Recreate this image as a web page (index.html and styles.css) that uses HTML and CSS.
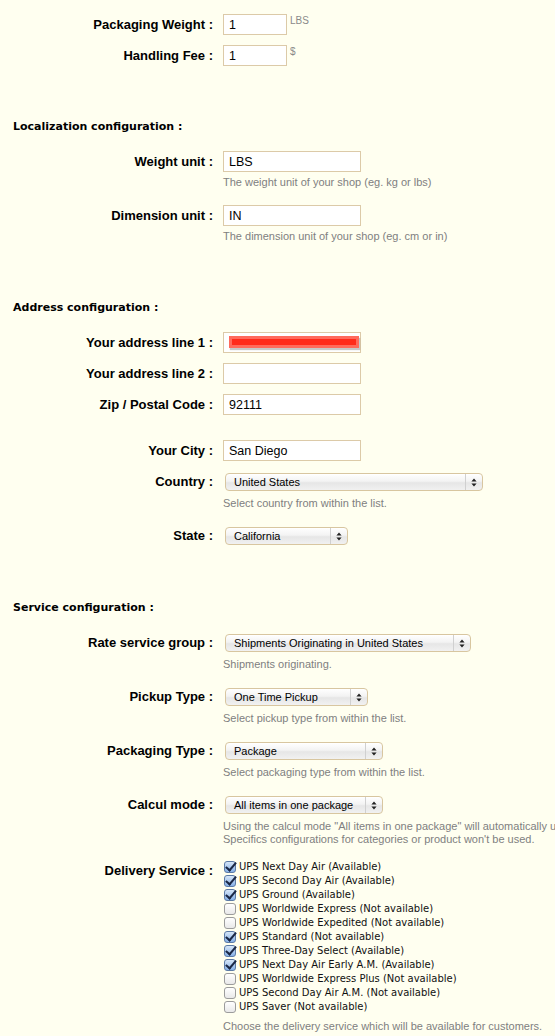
FILE: index.html
```html
<!DOCTYPE html>
<html lang="en">
<head>
<meta charset="utf-8">
<title>UPS configuration</title>
<link rel="stylesheet" href="styles.css">
</head>
<body>
<form class="form">
  <div class="row first">
    <label class="label">Packaging Weight :</label>
    <div class="field">
      <input class="input small" type="text" value="1">
      <span class="unit">LBS</span>
    </div>
  </div>
  <div class="row">
    <label class="label">Handling Fee :</label>
    <div class="field">
      <input class="input small" type="text" value="1">
      <span class="unit">$</span>
    </div>
  </div>

  <h3 class="section-title loc">Localization configuration :</h3>
  <div class="row gap16">
    <label class="label">Weight unit :</label>
    <div class="field"><input class="input" type="text" value="LBS"></div>
    <p class="help">The weight unit of your shop (eg. kg or lbs)</p>
  </div>
  <div class="row gap16">
    <label class="label">Dimension unit :</label>
    <div class="field"><input class="input" type="text" value="IN"></div>
    <p class="help">The dimension unit of your shop (eg. cm or in)</p>
  </div>

  <h3 class="section-title addr">Address configuration :</h3>
  <div class="row gap16">
    <label class="label">Your address line 1 :</label>
    <div class="field">
      <div class="redacted">
        <input class="input" type="text" value="">
        <span class="redact-bar"></span>
      </div>
    </div>
  </div>
  <div class="row">
    <label class="label">Your address line 2 :</label>
    <div class="field"><input class="input" type="text" value=""></div>
  </div>
  <div class="row">
    <label class="label">Zip / Postal Code :</label>
    <div class="field"><input class="input" type="text" value="92111"></div>
  </div>
  <div class="row gap25">
    <label class="label">Your City :</label>
    <div class="field"><input class="input" type="text" value="San Diego"></div>
  </div>
  <div class="row sel gap12">
    <label class="label">Country :</label>
    <div class="field">
      <div class="select w-country"><span class="select-text">United States</span><span class="select-arrow"><svg width="6" height="9" viewBox="0 0 6 9"><path d="M3 0.5 L5.6 3.6 H0.4 Z M3 8.5 L5.6 5.4 H0.4 Z" fill="#222"/></svg></span></div>
    </div>
    <p class="help">Select country from within the list.</p>
  </div>
  <div class="row sel gap17">
    <label class="label">State :</label>
    <div class="field">
      <div class="select w-state"><span class="select-text">California</span><span class="select-arrow"><svg width="6" height="9" viewBox="0 0 6 9"><path d="M3 0.5 L5.6 3.6 H0.4 Z M3 8.5 L5.6 5.4 H0.4 Z" fill="#222"/></svg></span></div>
    </div>
  </div>

  <h3 class="section-title serv">Service configuration :</h3>
  <div class="row sel gap18">
    <label class="label">Rate service group :</label>
    <div class="field">
      <div class="select w-rate"><span class="select-text">Shipments Originating in United States</span><span class="select-arrow"><svg width="6" height="9" viewBox="0 0 6 9"><path d="M3 0.5 L5.6 3.6 H0.4 Z M3 8.5 L5.6 5.4 H0.4 Z" fill="#222"/></svg></span></div>
    </div>
    <p class="help">Shipments originating.</p>
  </div>
  <div class="row sel gap17">
    <label class="label">Pickup Type :</label>
    <div class="field">
      <div class="select w-pickup"><span class="select-text">One Time Pickup</span><span class="select-arrow"><svg width="6" height="9" viewBox="0 0 6 9"><path d="M3 0.5 L5.6 3.6 H0.4 Z M3 8.5 L5.6 5.4 H0.4 Z" fill="#222"/></svg></span></div>
    </div>
    <p class="help">Select pickup type from within the list.</p>
  </div>
  <div class="row sel gap17">
    <label class="label">Packaging Type :</label>
    <div class="field">
      <div class="select w-pack"><span class="select-text">Package</span><span class="select-arrow"><svg width="6" height="9" viewBox="0 0 6 9"><path d="M3 0.5 L5.6 3.6 H0.4 Z M3 8.5 L5.6 5.4 H0.4 Z" fill="#222"/></svg></span></div>
    </div>
    <p class="help">Select packaging type from within the list.</p>
  </div>
  <div class="row sel gap17">
    <label class="label">Calcul mode :</label>
    <div class="field">
      <div class="select w-pack"><span class="select-text">All items in one package</span><span class="select-arrow"><svg width="6" height="9" viewBox="0 0 6 9"><path d="M3 0.5 L5.6 3.6 H0.4 Z M3 8.5 L5.6 5.4 H0.4 Z" fill="#222"/></svg></span></div>
    </div>
    <p class="help nowrap">Using the calcul mode "All items in one package" will automatically use the default package size.<br>Specifics configurations for categories or product won't be used.</p>
  </div>

  <div class="row checks gap14">
    <label class="label top">Delivery Service :</label>
    <ul class="checklist">
      <li><span class="cb on"></span>UPS Next Day Air (Available)</li>
      <li><span class="cb on"></span>UPS Second Day Air (Available)</li>
      <li><span class="cb on"></span>UPS Ground (Available)</li>
      <li><span class="cb"></span>UPS Worldwide Express (Not available)</li>
      <li><span class="cb"></span>UPS Worldwide Expedited (Not available)</li>
      <li><span class="cb on"></span>UPS Standard (Not available)</li>
      <li><span class="cb on"></span>UPS Three-Day Select (Available)</li>
      <li><span class="cb on"></span>UPS Next Day Air Early A.M. (Available)</li>
      <li><span class="cb"></span>UPS Worldwide Express Plus (Not available)</li>
      <li><span class="cb"></span>UPS Second Day Air A.M. (Not available)</li>
      <li><span class="cb"></span>UPS Saver (Not available)</li>
    </ul>
    <p class="help">Choose the delivery service which will be available for customers.</p>
  </div>
</form>
</body>
</html>
```

FILE: styles.css
```css
html, body {
  overflow-x: hidden;
}
body {
  margin: 0;
  background: #fffff0;
  font-family: "Liberation Sans", Arial, sans-serif;
  color: #000;
}
.form {
  padding-top: 14px;
}
.row {
  display: grid;
  grid-template-columns: 213px 1fr;
  column-gap: 10px;
  margin-top: 10px;
}
.row.first { margin-top: 0; }
.row.gap12 { margin-top: 12px; }
.row.gap14 { margin-top: 14px; }
.row.gap16 { margin-top: 16px; }
.row.gap17 { margin-top: 17px; }
.row.gap18 { margin-top: 18px; }
.row.gap25 { margin-top: 25px; }

.label {
  grid-column: 1;
  grid-row: 1;
  align-self: center;
  text-align: right;
  font-weight: bold;
  font-size: 13px;
  line-height: 16px;
  white-space: nowrap;
}
.label.top {
  align-self: start;
  padding-top: 3px;
}
.field {
  grid-column: 2;
  grid-row: 1;
  display: flex;
  align-items: flex-start;
  min-width: 0;
}
.help {
  grid-column: 2;
  grid-row: 2;
  margin: 4px 0 0;
  font-size: 11px;
  line-height: 13px;
  color: #808080;
}
.sel .help, .checks .help { margin-top: 6px; }
.help.nowrap { white-space: nowrap; }

.section-title {
  margin: 0;
  padding-left: 13px;
  font-family: "DejaVu Sans", Verdana, sans-serif;
  font-size: 11px;
  line-height: 16px;
  font-weight: bold;
}
.section-title.loc { margin-top: 53px; }
.section-title.addr { margin-top: 57px; }
.section-title.serv { margin-top: 55px; }

.input {
  box-sizing: border-box;
  width: 138px;
  height: 21px;
  margin: 0;
  padding: 0 5px;
  border: 1px solid #dccaa8;
  background: #fff;
  font-family: "Liberation Sans", Arial, sans-serif;
  font-size: 12.5px;
  color: #000;
  outline: none;
}
.input.small { width: 64px; }
.unit {
  margin: 1px 0 0 3px;
  font-size: 10px;
  line-height: 12px;
  color: #8a8a8a;
}
.redacted {
  position: relative;
  width: 138px;
  height: 21px;
}
.redact-bar {
  position: absolute;
  left: 6px;
  top: 4px;
  width: 124px;
  height: 6px;
  border: 3px solid #ff6a5c;
  background: #ff2a1a;
  box-shadow: 1px 2px 1px rgba(0, 0, 0, 0.22);
}

.select {
  box-sizing: border-box;
  display: flex;
  align-items: stretch;
  height: 18px;
  margin-left: 2px;
  border: 1px solid #d8c6a0;
  border-radius: 4px;
  background: linear-gradient(to bottom, #ffffff 0%, #f3f3f3 45%, #e6e6e6 55%, #f1f1f1 100%);
  box-shadow: inset 0 1px 0 #fff;
  font-size: 11px;
  color: #000;
  overflow: hidden;
}
.select-text {
  flex: 1;
  padding-left: 8px;
  line-height: 16px;
  white-space: nowrap;
  overflow: hidden;
}
.select-arrow {
  width: 16px;
  display: flex;
  align-items: center;
  justify-content: center;
  border-left: 1px solid #d0d0d0;
}
.w-country { width: 258px; }
.w-state { width: 123px; }
.w-rate { width: 246px; }
.w-pickup { width: 143px; }
.w-pack { width: 158px; }

.checklist {
  grid-column: 2;
  grid-row: 1;
  list-style: none;
  margin: 0;
  padding: 0;
  font-family: "DejaVu Sans", Verdana, sans-serif;
  font-size: 10px;
  line-height: 14px;
  color: #111;
}
.checklist li {
  display: flex;
  align-items: center;
  white-space: nowrap;
}
.cb {
  box-sizing: border-box;
  width: 12px;
  height: 12px;
  margin: 0 3px 0 1px;
  border: 1px solid #9c9c9c;
  border-radius: 3px;
  background: linear-gradient(to bottom, #ffffff, #e9e9e9);
  position: relative;
  flex: none;
}
.cb.on {
  border-color: #5b7aa6;
  background: linear-gradient(to bottom, #d6e6f8, #86b0e6);
}
.cb.on::after {
  content: "";
  position: absolute;
  left: 3px;
  top: -2px;
  width: 4px;
  height: 9px;
  border-right: 2px solid #1a2744;
  border-bottom: 2px solid #1a2744;
  transform: rotate(40deg);
}
```
